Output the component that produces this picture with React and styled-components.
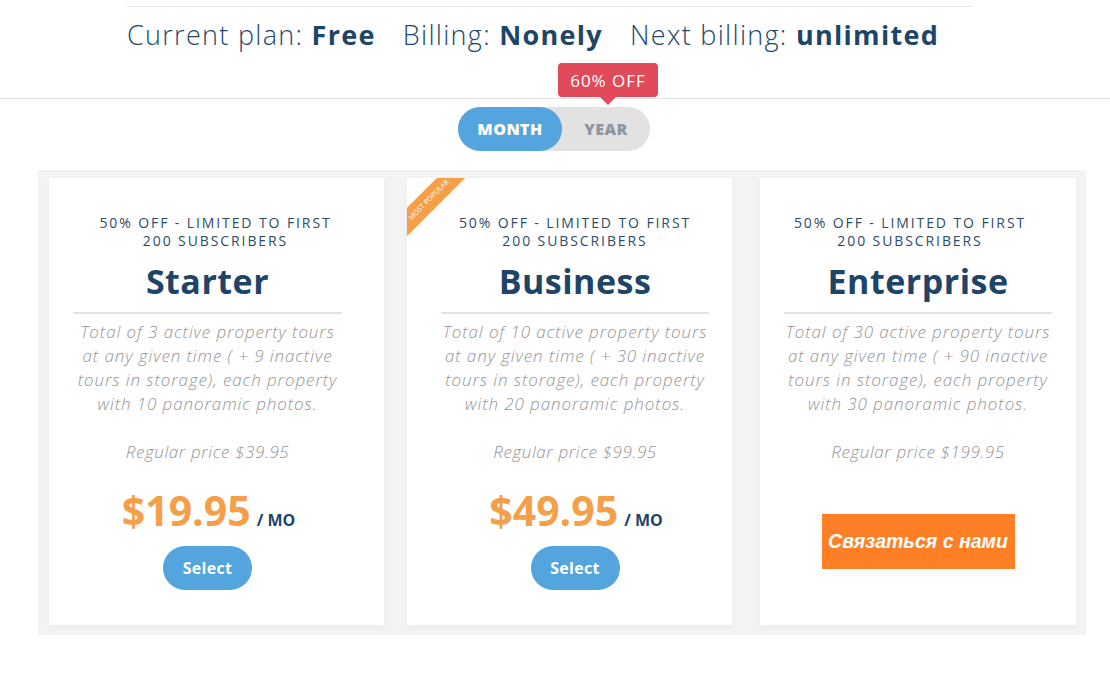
import React from "react";
import styled, { createGlobalStyle } from "styled-components";

const Global = createGlobalStyle`
  html, body { margin: 0; padding: 0; background: #fff; }
  body { font-family: "Open Sans", "Noto Sans", sans-serif; }
  * { box-sizing: border-box; }
`;

const Page = styled.div`
  width: 1110px;
  height: 679px;
  overflow: hidden;
  background: #fff;
  padding-top: 6px;
`;

const Header = styled.div`
  width: 845px;
  margin-left: 127px;
  border-top: 1px solid #e6e6e6;
  height: 92px;
  padding-top: 9px;
`;

const Status = styled.div`
  display: flex;
  gap: 27px;
  font-size: 27px;
  font-weight: 300;
  color: #24496b;
  letter-spacing: 1.3px;
  white-space: nowrap;
  b { font-weight: 700; color: #1e4568; }
`;

const Rule = styled.div`
  border-top: 1px solid #e3e3e3;
`;

const ToggleRow = styled.div`
  display: flex;
  justify-content: center;
  padding: 8px 2px 0 0;
`;

const Toggle = styled.div`
  position: relative;
  display: flex;
  width: 192px;
  height: 44px;
  border-radius: 22px;
  background: #e2e2e2;
`;

const ToggleOption = styled.div`
  flex: 0 0 ${(p) => (p.$active ? "104px" : "88px")};
  display: flex;
  align-items: center;
  justify-content: center;
  border-radius: 22px;
  font-size: 16px;
  font-weight: 800;
  background: ${(p) => (p.$active ? "#54a4dd" : "transparent")};
  color: ${(p) => (p.$active ? "#fff" : "#8e95a2")};
  letter-spacing: 0.4px;
`;

const Tip = styled.div`
  position: absolute;
  left: 100px;
  top: -44px;
  width: 100px;
  height: 34px;
  border-radius: 4px;
  background: #e04a5a;
  color: #fff;
  font-size: 17px;
  letter-spacing: 1px;
  display: flex;
  align-items: center;
  justify-content: center;
  &::after {
    content: "";
    position: absolute;
    left: 42px;
    bottom: -8px;
    border-left: 8px solid transparent;
    border-right: 8px solid transparent;
    border-top: 8px solid #e04a5a;
  }
`;

const Band = styled.div`
  margin: 19px 0 0 38px;
  width: 1048px;
  height: 465px;
  background: #f3f3f3;
  padding: 8px 0 0 11px;
`;

const Cards = styled.div`
  display: flex;
  align-items: flex-start;
`;

const Card = styled.div`
  position: relative;
  overflow: hidden;
  flex: 0 0 ${(p) => p.$w}px;
  margin-left: ${(p) => p.$gap}px;
  background: #fff;
  height: 447px;
  padding: 36px ${(p) => p.$pr}px 0 ${(p) => p.$pl}px;
  display: flex;
  flex-direction: column;
  align-items: center;
  text-align: center;
  box-shadow: 0 2px 6px rgba(0, 0, 0, 0.04);
`;

const Offer = styled.div`
  font-size: 14px;
  line-height: 18px;
  letter-spacing: 1.9px;
  color: #2c4b67;
  text-transform: uppercase;
  font-weight: 400;
  white-space: nowrap;
  margin-left: ${(p) => (p.$shift > 0 ? p.$shift * 2 : 0)}px;
  margin-right: ${(p) => (p.$shift < 0 ? -p.$shift * 2 : 0)}px;
`;

const Title = styled.h2`
  margin: 8px 0 0;
  font-size: 34px;
  line-height: 46px;
  font-weight: 700;
  letter-spacing: 0.5px;
  color: #1e4568;
  align-self: stretch;
  padding-bottom: 8px;
  border-bottom: 2px solid #e3e3e3;
`;

const Desc = styled.p`
  margin: 6px 0 0;
  font-size: 17px;
  line-height: 24px;
  font-style: italic;
  font-weight: 300;
  letter-spacing: 0.9px;
  color: #959595;
  white-space: nowrap;
`;

const Regular = styled.div`
  margin-top: 24px;
  font-size: 17px;
  line-height: 24px;
  font-style: italic;
  font-weight: 300;
  letter-spacing: 0.6px;
  color: #959595;
`;

const PriceRow = styled.div`
  margin-top: 18px;
  display: flex;
  align-items: baseline;
  gap: 6px;
  padding-left: 2px;
`;

const Price = styled.span`
  font-size: 41px;
  line-height: 56px;
  font-weight: 700;
  color: #f5a048;
`;

const Per = styled.span`
  font-size: 16px;
  font-weight: 700;
  color: #1e4568;
`;

const SelectBtn = styled.button`
  margin-top: 8px;
  width: 89px;
  height: 44px;
  border: none;
  border-radius: 22px;
  background: #54a4dd;
  color: #fff;
  font-family: inherit;
  font-size: 16px;
  font-weight: 700;
  letter-spacing: 0.3px;
`;

const Contact = styled.button`
  margin-top: 50px;
  width: 193px;
  height: 55px;
  border: none;
  background: #ff7f27;
  color: #fff;
  font-family: "Liberation Sans", Arial, sans-serif;
  font-size: 19.5px;
  font-weight: 700;
  font-style: italic;
  padding: 0;
`;

const Ribbon = styled.div`
  position: absolute;
  left: -28px;
  top: 12px;
  width: 100px;
  height: 20px;
  background: #f5a048;
  transform: rotate(-45deg);
  color: #fff;
  font-size: 7px;
  line-height: 20px;
  text-align: center;
  letter-spacing: 0.1px;
  white-space: nowrap;
`;

const plans = [
  {
    name: "Starter",
    w: 335, gap: 0, pl: 24, pr: 42, shift: 8,
    desc: ["Total of 3 active property tours", "at any given time ( + 9 inactive", "tours in storage), each property", "with 10 panoramic photos."],
    regular: "$39.95",
    price: "$19.95",
  },
  {
    name: "Business",
    w: 325, gap: 23, pl: 34, pr: 23, shift: 0,
    popular: true,
    desc: ["Total of 10 active property tours", "at any given time ( + 30 inactive", "tours in storage), each property", "with 20 panoramic photos."],
    regular: "$99.95",
    price: "$49.95",
  },
  {
    name: "Enterprise",
    w: 316, gap: 28, pl: 24, pr: 24, shift: -8,
    contact: true,
    desc: ["Total of 30 active property tours", "at any given time ( + 90 inactive", "tours in storage), each property", "with 30 panoramic photos."],
    regular: "$199.95",
  },
];

export default function App() {
  return (
    <Page>
      <Global />
      <Header>
        <Status>
          <span>Current plan: <b>Free</b></span>
          <span>Billing: <b>Nonely</b></span>
          <span>Next billing: <b>unlimited</b></span>
        </Status>
      </Header>
      <Rule />
      <ToggleRow>
        <Toggle>
          <ToggleOption $active>MONTH</ToggleOption>
          <ToggleOption>YEAR</ToggleOption>
          <Tip>60% OFF</Tip>
        </Toggle>
      </ToggleRow>
      <Band>
        <Cards>
          {plans.map((p) => (
            <Card key={p.name} $w={p.w} $gap={p.gap} $pl={p.pl} $pr={p.pr}>
              {p.popular && <Ribbon>MOST POPULAR</Ribbon>}
              <Offer $shift={p.shift}>
                50% OFF - LIMITED TO FIRST
                <br />
                200 SUBSCRIBERS
              </Offer>
              <Title>{p.name}</Title>
              <Desc>
                {p.desc.map((l, i) => (
                  <React.Fragment key={i}>
                    {l}
                    {i < p.desc.length - 1 && <br />}
                  </React.Fragment>
                ))}
              </Desc>
              <Regular>Regular price {p.regular}</Regular>
              {p.contact ? (
                <Contact>Связаться с нами</Contact>
              ) : (
                <>
                  <PriceRow>
                    <Price>{p.price}</Price>
                    <Per>/ MO</Per>
                  </PriceRow>
                  <SelectBtn>Select</SelectBtn>
                </>
              )}
            </Card>
          ))}
        </Cards>
      </Band>
    </Page>
  );
}
